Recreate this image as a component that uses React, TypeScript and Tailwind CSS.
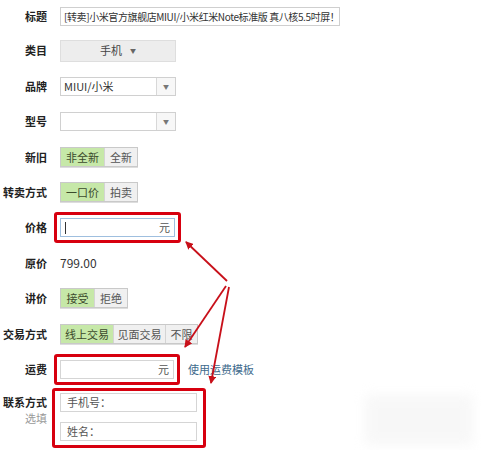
import React from 'react';

const font = { fontFamily: '"Noto Sans CJK SC", "Liberation Sans", sans-serif' };

const Label: React.FC<{ children: React.ReactNode }> = ({ children }) => (
  <div className="w-[47px] shrink-0 flex justify-end whitespace-nowrap text-[11px] font-bold text-[#222]">{children}</div>
);

const Row: React.FC<{ label: string; first?: boolean; children: React.ReactNode }> = ({ label, first, children }) => (
  <div className={`flex items-center ${first ? 'h-[33px]' : 'h-[35.4px]'}`}>
    <Label>{label}</Label>
    <div className="ml-[13px] flex items-center">{children}</div>
  </div>
);

const Toggle: React.FC<{ items: { text: string; w: string }[] }> = ({ items }) => (
  <div className="flex h-[20px] border border-[#c9c9c9] shadow-[0_1px_0_#ddd]">
    {items.map((it, i) => (
      <div
        key={it.text}
        className={`${it.w} flex items-center justify-center text-[11px] ${
          i === 0 ? 'bg-[#c6e8a8] text-[#3b4a2c]' : 'bg-[#f0f0f0] text-[#555] border-l border-[#d4d4d4]'
        }`}
      >
        {it.text}
      </div>
    ))}
  </div>
);

const Select: React.FC<{ value?: string }> = ({ value }) => (
  <div className="flex h-[19px] w-[116px] border border-[#d0d0d0] bg-white">
    <div className="flex-1 pl-[3px] text-[11px] leading-[17px] text-[#333]">{value}</div>
    <div className="w-[19px] border-l border-[#d8d8d8] bg-[#f7f7f7] flex items-center justify-center text-[6px] text-[#777]">▼</div>
  </div>
);

const RedBox: React.FC<{ children: React.ReactNode }> = ({ children }) => (
  <div className="-ml-[6px] border-[3px] border-[#d7000f] rounded-[3px] p-[3px]">{children}</div>
);

export default function App() {
  return (
    <div className="relative w-[481px] h-[450px] bg-white overflow-hidden" style={font}>
      <div className="flex flex-col">
        <Row label="标题" first>
          <div className="h-[19px] w-[280px] border border-[#cfcfcf] pl-[3px] text-[10px] tracking-[-0.4px] leading-[17px] text-[#333] whitespace-nowrap overflow-hidden">
            [转卖]小米官方旗舰店MIUI/小米红米Note标准版 真八核5.5吋屏！
          </div>
        </Row>
        <Row label="类目">
          <div className="h-[22px] w-[116px] bg-[#ededed] border border-[#dedede] flex items-center justify-center text-[11px] text-[#444]">
            手机 <span className="ml-[8px] text-[6px] text-[#666]">▼</span>
          </div>
        </Row>
        <Row label="品牌">
          <Select value="MIUI/小米" />
        </Row>
        <Row label="型号">
          <Select />
        </Row>
        <Row label="新旧">
          <Toggle items={[{ text: '非全新', w: 'w-[43px]' }, { text: '全新', w: 'w-[33px]' }]} />
        </Row>
        <Row label="转卖方式">
          <Toggle items={[{ text: '一口价', w: 'w-[43px]' }, { text: '拍卖', w: 'w-[33px]' }]} />
        </Row>
        <Row label="价格">
          <RedBox>
            <div className="h-[19px] w-[115px] border border-[#9fbfdf] flex items-center justify-between px-[4px] text-[11px] text-[#555]">
              <span className="h-[12px] w-px bg-[#333]" />
              <span>元</span>
            </div>
          </RedBox>
        </Row>
        <Row label="原价">
          <div className="text-[12px] text-[#333]">799.00</div>
        </Row>
        <Row label="讲价">
          <Toggle items={[{ text: '接受', w: 'w-[33px]' }, { text: '拒绝', w: 'w-[33px]' }]} />
        </Row>
        <Row label="交易方式">
          <Toggle
            items={[
              { text: '线上交易', w: 'w-[52px]' },
              { text: '见面交易', w: 'w-[52px]' },
              { text: '不限', w: 'w-[32px]' },
            ]}
          />
        </Row>
        <Row label="运费">
          <RedBox>
            <div className="h-[19px] w-[114px] border border-[#d5d5d5] flex items-center justify-end px-[4px] text-[11px] text-[#555]">
              元
            </div>
          </RedBox>
          <span className="ml-[8px] text-[11px] text-[#3d6a8c]">使用运费模板</span>
        </Row>
        <div className="flex">
          <div className="w-[47px] pt-[7px] flex flex-col items-end whitespace-nowrap">
            <div className="text-[11px] font-bold text-[#222]">联系方式</div>
            <div className="text-[11px] text-[#999]">选填</div>
          </div>
          <div className="ml-[5px] mt-[1px] w-[154px] h-[60px] border-[3px] border-[#d7000f] rounded-[3px] pl-[5px] pt-[2px] flex flex-col gap-[10px]">
            <div className="h-[19px] w-[137px] border border-[#d5d5d5] pl-[6px] text-[11px] leading-[17px] text-[#555]">手机号：</div>
            <div className="h-[19px] w-[137px] border border-[#d5d5d5] pl-[6px] text-[11px] leading-[17px] text-[#555]">姓名：</div>
          </div>
        </div>
      </div>

      <svg className="absolute inset-0 pointer-events-none" width="481" height="450" viewBox="0 0 481 450">
        <defs>
          <marker id="ah" markerWidth="8" markerHeight="8" refX="7" refY="4" orient="auto" markerUnits="userSpaceOnUse">
            <path d="M0,0 L8,4 L0,8 Z" fill="#c8101a" />
          </marker>
        </defs>
        <g stroke="#c8101a" strokeWidth="1.8" fill="none">
          <line x1="227" y1="281" x2="186" y2="242" markerEnd="url(#ah)" />
          <line x1="226" y1="286" x2="185" y2="347" markerEnd="url(#ah)" />
          <line x1="229" y1="287" x2="211" y2="383" markerEnd="url(#ah)" />
        </g>
      </svg>

      <div className="absolute left-[365px] top-[395px] w-[108px] h-[50px] bg-[#f0f0f0] blur-[6px] opacity-50" />
    </div>
  );
}
